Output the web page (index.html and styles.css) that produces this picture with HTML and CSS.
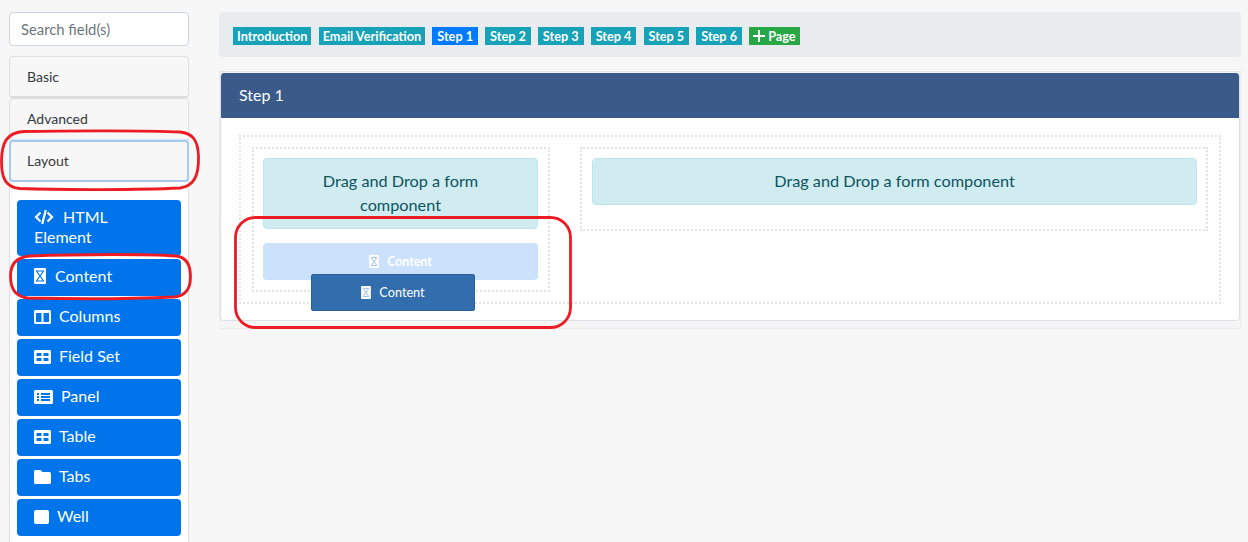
FILE: index.html
```html
<!DOCTYPE html>
<html lang="en">
<head>
  <meta charset="UTF-8" />
  <title>Form Builder</title>
  <link rel="stylesheet" href="styles.css">
</head>
<body>
  <svg class="defs" width="0" height="0">
    <symbol id="i-code" viewBox="0 0 20 16">
      <path d="M6.500 3.500 2 8l4.500 4.500M13.500 3.500 18 8l-4.500 4.500M11.800 1 8.200 15" fill="none" stroke="#fff" stroke-width="2.200"/>
    </symbol>
    <symbol id="i-content" viewBox="0 0 12 16">
      <rect width="12" height="16" rx="1" fill="#fff"/>
      <path d="M2.500 3h7L2.500 13h7z" fill="none" stroke="#0074ea" stroke-width="1.100"/>
    </symbol>
    <symbol id="i-content-dim" viewBox="0 0 12 16">
      <rect width="12" height="16" rx="1" fill="#fff"/>
      <path d="M2.500 3h7L2.500 13h7z" fill="none" stroke="#8fbcec" stroke-width="1.100"/>
    </symbol>
    <symbol id="i-columns" viewBox="0 0 17 14">
      <path fill="#fff" fill-rule="evenodd" d="M1.500 0h14A1.500 1.500 0 0 1 17 1.500v11a1.500 1.500 0 0 1-1.500 1.500h-14A1.500 1.500 0 0 1 0 12.500v-11A1.500 1.500 0 0 1 1.500 0zM2 3v9h5.500V3zm7.500 0v9H15V3z"/>
    </symbol>
    <symbol id="i-grid" viewBox="0 0 17 14">
      <path fill="#fff" fill-rule="evenodd" d="M1.500 0h14A1.500 1.500 0 0 1 17 1.500v11a1.500 1.500 0 0 1-1.500 1.500h-14A1.500 1.500 0 0 1 0 12.500v-11A1.500 1.500 0 0 1 1.500 0zM2.500 3v3h5V3zm7 0v3h5V3zm-7 5v3h5V8zm7 0v3h5V8z"/>
    </symbol>
    <symbol id="i-panel" viewBox="0 0 19 14">
      <path fill="#fff" fill-rule="evenodd" d="M1.500 0h16A1.500 1.500 0 0 1 19 1.500v11a1.500 1.500 0 0 1-1.500 1.500h-16A1.500 1.500 0 0 1 0 12.500v-11A1.500 1.500 0 0 1 1.500 0zM3 3v2h2V3zm4 0v2h9V3zM3 6v2h2V6zm4 0v2h9V6zM3 9v2h2V9zm4 0v2h9V9z"/>
    </symbol>
    <symbol id="i-folder" viewBox="0 0 17 14">
      <path fill="#fff" d="M1.500 0h5L8.500 2h7A1.500 1.500 0 0 1 17 3.500v9a1.500 1.500 0 0 1-1.500 1.500h-14A1.500 1.500 0 0 1 0 12.500v-11A1.500 1.500 0 0 1 1.500 0z"/>
    </symbol>
    <symbol id="i-square" viewBox="0 0 15 14">
      <rect width="15" height="14" rx="2" fill="#fff"/>
    </symbol>
  </svg>

  <div class="page">
    <aside class="sidebar">
      <input class="search" type="text" placeholder="Search field(s)">

      <div class="group-head first">Basic</div>
      <div class="group-head">Advanced</div>
      <div class="group-head focused">Layout</div>

      <div class="group-body">
        <a class="field-btn"><svg class="ic ic-code"><use href="#i-code"/></svg>HTML Element</a>
        <a class="field-btn"><svg class="ic ic-content"><use href="#i-content"/></svg>Content</a>
        <a class="field-btn"><svg class="ic ic-wide"><use href="#i-columns"/></svg>Columns</a>
        <a class="field-btn"><svg class="ic ic-wide"><use href="#i-grid"/></svg>Field Set</a>
        <a class="field-btn"><svg class="ic ic-panel"><use href="#i-panel"/></svg>Panel</a>
        <a class="field-btn"><svg class="ic ic-wide"><use href="#i-grid"/></svg>Table</a>
        <a class="field-btn"><svg class="ic ic-wide"><use href="#i-folder"/></svg>Tabs</a>
        <a class="field-btn"><svg class="ic ic-well"><use href="#i-square"/></svg>Well</a>
      </div>
    </aside>

    <main class="main">
      <nav class="pages">
        <span class="badge">Introduction</span>
        <span class="badge">Email Verification</span>
        <span class="badge active">Step 1</span>
        <span class="badge">Step 2</span>
        <span class="badge">Step 3</span>
        <span class="badge">Step 4</span>
        <span class="badge">Step 5</span>
        <span class="badge">Step 6</span>
        <span class="badge add"><svg class="plus" viewBox="0 0 12 12"><path d="M6 0v12M0 6h12" stroke="#fff" stroke-width="2"/></svg>Page</span>
      </nav>

      <div class="card-wrap">
        <section class="card">
          <header class="card-head">Step 1</header>
          <div class="card-body">
            <div class="dotted outer">
              <div class="dotted col col-left">
                <div class="drop">Drag and Drop a form component</div>
                <div class="placeholder"><svg class="ic-small"><use href="#i-content-dim"/></svg>Content</div>
              </div>
              <div class="dotted col col-right">
                <div class="drop">Drag and Drop a form component</div>
              </div>
            </div>
          </div>
        </section>
      </div>
    </main>
  </div>

  <div class="ghost"><svg class="ic-small"><use href="#i-content-dim"/></svg>Content</div>

  <svg class="marks" width="1248" height="542" viewBox="0 0 1248 542">
    <path d="M24 131.500C70 130.500 150 130.500 180 132C193 133 198 141 198.500 156C199 176 194 186 180 188C140 190 60 190 20 188.500C7 187.500 1.500 180 1.500 162C1.500 142 7 132.500 24 131.500Z"/>
    <path d="M30 256C80 254 150 254 176 256C186 257 190.500 264 190.500 277C190.500 290 185 296 174 297C130 299 70 299 28 298C16 297 10.500 290 10.500 276C10.500 264 16 257 30 256Z"/>
    <rect x="235.500" y="217.500" width="335" height="110" rx="20"/>
  </svg>
</body>
</html>
```

FILE: styles.css
```css
* {
  box-sizing: border-box;
}
html, body {
  margin: 0;
  height: 542px;
  overflow: hidden;
}
body {
  font-family: "Lato", "Noto Sans", sans-serif;
  font-size: 16px;
  background: #f7f7f7;
  color: #212529;
}
.defs {
  display: block;
}
.page {
  display: flex;
  gap: 30px;
  padding: 12px 7px 0 9px;
}

/* sidebar */
.sidebar {
  width: 180px;
  flex: none;
  height: 530px;
  overflow: hidden;
}
.search {
  display: block;
  width: 100%;
  height: 34px;
  padding: 0 11px;
  margin-bottom: 10px;
  border: 1px solid #ced4da;
  border-radius: 4px;
  background: #fff;
  font: inherit;
  font-size: 14.800px;
}
.search::placeholder {
  color: #6c757d;
}
.group-head {
  height: 42px;
  padding: 11px 17px;
  border: 1px solid #dfdfdf;
  border-radius: 4px 4px 0 0;
  background: #f7f7f7;
  color: #33383d;
  font-size: 14px;
  line-height: 18px;
}
.group-head.first {
  border-bottom: 2px solid #dcdcdc;
  border-radius: 4px;
}
.group-head.focused {
  border: 2px solid #a9caee;
  border-radius: 4px;
  padding: 10px 16px;
  box-shadow: 0 0 0 1px #d5e6f8;
}
.group-body {
  padding: 18px 7px 0;
  border: 1px solid #dfdfdf;
  border-top: 0;
  background: #fff;
  height: 400px;
}
.field-btn {
  display: block;
  padding: 7px 17px 9px;
  margin-bottom: 3px;
  border-radius: 4px;
  background: #0074ea;
  color: #fff;
  line-height: 20px;
  min-height: 37px;
}
.ic {
  display: inline-block;
  vertical-align: -2px;
  height: 14px;
  width: 17px;
  margin-right: 8px;
}
.ic-code {
  width: 20px;
  height: 16px;
  margin-right: 9px;
}
.ic-content {
  width: 12px;
  height: 16px;
  margin-right: 9px;
}
.ic-panel {
  width: 19px;
  margin-right: 8px;
}
.ic-well {
  width: 15px;
  margin-right: 8px;
}

/* page tabs */
.main {
  flex: 1;
  min-width: 0;
}
.pages {
  display: flex;
  gap: 7.300px;
  height: 45px;
  padding: 15px 14px 0;
  margin-bottom: 14px;
  border-radius: 4px;
  background: #e9ecef;
}
.badge {
  height: 18px;
  min-width: 45.500px;
  padding: 0 4px;
  background: #17a2b8;
  color: #fff;
  font-size: 12.700px;
  font-weight: 700;
  line-height: 18px;
  text-align: center;
}
.badge.active {
  background: #007bff;
}
.badge.add {
  display: flex;
  align-items: center;
  background: #28a745;
}
.plus {
  width: 12px;
  height: 12px;
  margin-right: 3px;
}

/* step card */
.card-wrap {
  padding: 1px 0 7px;
  border: 1px solid #ececec;
  border-top-color: #e4e4e4;
  background: #f5f5f5;
}
.card {
  height: 248px;
  border: 1px solid #dde0e4;
  border-top: 0;
  border-radius: 4px;
  background: #fff;
  overflow: hidden;
}
.card-head {
  height: 45px;
  padding: 0 18px;
  background: #3a5a8a;
  color: #fff;
  line-height: 44px;
}
.card-body {
  padding: 17px 18px 0;
}
.dotted {
  border: 2px dotted #e3e3e3;
}
.outer {
  display: flex;
  align-items: flex-start;
  gap: 30px;
  height: 169px;
  padding: 10px 11px;
}
.col-left {
  width: 298px;
  flex: none;
  padding: 9px 10px 10px 9px;
}
.col-right {
  flex: 1;
  padding: 9px 9px 9px 10px;
}
.drop {
  padding: 10px 20px 11px;
  border: 1px solid #bee5eb;
  border-radius: 4px;
  background: #d1ecf1;
  color: #0c5460;
  font-size: 16.250px;
  text-align: center;
  line-height: 24px;
  margin-bottom: 15px;
}
.col-left .drop {
  margin-bottom: 14px;
}
.placeholder {
  display: flex;
  align-items: center;
  justify-content: center;
  height: 37px;
  border-radius: 4px;
  background: #cce2fc;
  color: #fff;
  font-size: 12.300px;
  font-weight: 700;
}
.ic-small {
  width: 10px;
  height: 13px;
  margin-right: 8px;
}

/* item being dragged, lies over the form */
.ghost {
  position: absolute;
  left: 311px;
  top: 274px;
  width: 164px;
  height: 37px;
  padding-bottom: 1px;
  display: flex;
  align-items: center;
  justify-content: center;
  border: 1px solid #2a609f;
  border-radius: 2px;
  background: #326eae;
  color: #fff;
  font-size: 12.700px;
}

/* hand-drawn red marks on the screenshot */
.marks {
  position: absolute;
  left: 0;
  top: 0;
  pointer-events: none;
}
.marks path, .marks rect {
  fill: none;
  stroke: #ed1c24;
  stroke-width: 2.800;
}
```
